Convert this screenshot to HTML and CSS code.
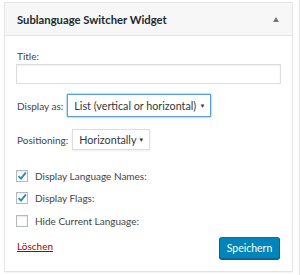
FILE: index.html
```html
<!DOCTYPE html>
<html>
<head>
<meta charset="utf-8">
<link rel="stylesheet" href="styles.css">
</head>
<body>
<div class="page">
  <div class="widget">
    <div class="widget-top">
      <span class="widget-title">Sublanguage Switcher Widget</span>
      <span class="toggle"></span>
    </div>
    <div class="widget-inside">
      <label class="label-block">Title:</label>
      <div class="text-input"></div>
      <div class="row row-display">
        <span class="row-label">Display as:</span>
        <div class="select select-focus"><span class="select-text">List (vertical or horizontal)</span><span class="caret">&#9660;</span></div>
      </div>
      <div class="row row-pos">
        <span class="row-label">Positioning:</span>
        <div class="select"><span class="select-text">Horizontally</span><span class="caret">&#9660;</span></div>
      </div>
      <div class="check-row first">
        <span class="checkbox"><svg viewBox="0 0 12 12" width="12" height="12"><path d="M2.6 6.2 L5 8.6 L9.8 2.6" fill="none" stroke="#1e8cbe" stroke-width="1.9"/></svg></span>
        <span class="check-label">Display Language Names:</span>
      </div>
      <div class="check-row second">
        <span class="checkbox"><svg viewBox="0 0 12 12" width="12" height="12"><path d="M2.6 6.2 L5 8.6 L9.8 2.6" fill="none" stroke="#1e8cbe" stroke-width="1.9"/></svg></span>
        <span class="check-label">Display Flags:</span>
      </div>
      <div class="check-row third">
        <span class="checkbox"></span>
        <span class="check-label">Hide Current Language:</span>
      </div>
      <div class="actions">
        <a class="delete">Löschen</a>
        <span class="button">Speichern</span>
      </div>
    </div>
  </div>
  <div class="side-line"></div>
</div>
</body>
</html>
```

FILE: styles.css
```css
html, body {
  margin: 0;
  padding: 0;
  background: #fff;
}
body {
  font-family: "Lato", "Open Sans", sans-serif;
  font-size: 10px;
  color: #444;
  width: 300px;
  height: 275px;
  overflow: hidden;
}
.page {
  display: flex;
  align-items: flex-start;
  padding: 2px 0 0 4px;
}
.side-line {
  margin-left: 6px;
  width: 1px;
  height: 280px;
  margin-top: -2px;
  background: #e5e5e5;
}
.widget {
  width: 289px;
  height: 270px;
  border: 1px solid #e5e5e5;
  box-sizing: border-box;
  box-shadow: 0 1px 1px rgba(0,0,0,0.04);
}
.widget-top {
  height: 32px;
  background: #f7f7f7;
  border-bottom: 1px solid #e5e5e5;
  display: flex;
  align-items: center;
  justify-content: space-between;
  padding: 0 13px 0 12px;
}
.widget-title {
  font-weight: 700;
  color: #23282d;
  font-size: 11.25px;
}
.toggle {
  width: 0;
  height: 0;
  border-left: 3.5px solid transparent;
  border-right: 3.5px solid transparent;
  border-bottom: 5px solid #72777c;
}
.widget-inside {
  padding: 0 11px;
  display: flex;
  flex-direction: column;
}
.label-block {
  display: block;
  margin-top: 13px;
  line-height: 14px;
  padding-left: 1px;
}
.text-input {
  margin-top: 1px;
  height: 20px;
  width: 265px;
  box-sizing: border-box;
  border: 1px solid #ddd;
  box-shadow: inset 0 1px 2px rgba(0,0,0,0.07);
  background: #fff;
}
.row {
  display: flex;
  align-items: center;
  gap: 4px;
  padding-left: 1px;
}
.row-display { margin-top: 10px; }
.row-pos { margin-top: 12px; }
.select {
  display: flex;
  align-items: center;
  justify-content: space-between;
  box-sizing: border-box;
  border: 1px solid #ddd;
  box-shadow: 0 1px 2px rgba(0,0,0,0.07);
  padding: 0 5px 0 6px;
  color: #32373c;
  background: #fff;
  white-space: nowrap;
}
.row-display .select {
  height: 23px;
  width: 144px;
}
.row-pos .select {
  height: 21px;
  width: 78px;
}
.select-focus {
  border-color: #5b9dd9;
  box-shadow: 0 0 2px rgba(30,140,190,0.8);
}
.select-text { font-size: 10.75px; }
.caret {
  font-size: 6px;
  color: #32373c;
}
.check-row {
  display: flex;
  align-items: center;
  gap: 7px;
  height: 14px;
}
.check-row.first { margin-top: 19px; }
.check-row.second { margin-top: 8px; }
.check-row.third { margin-top: 9px; }
.checkbox {
  width: 12px;
  height: 12px;
  box-sizing: border-box;
  border: 1px solid #b4b9be;
  box-shadow: inset 0 1px 2px rgba(0,0,0,0.1);
  background: #fff;
  position: relative;
  display: block;
}
.checkbox svg {
  position: absolute;
  left: -1px;
  top: -1px;
}
.actions {
  display: flex;
  justify-content: space-between;
  align-items: flex-start;
  margin-top: 9px;
}
.delete {
  color: #a00;
  text-decoration: underline;
  padding-left: 1px;
  margin-top: 3px;
}
.button {
  height: 22px;
  width: 61px;
  box-sizing: border-box;
  display: flex;
  align-items: center;
  justify-content: center;
  font-size: 10.5px;
  background: #0085ba;
  border: 1px solid;
  border-color: #0073aa #006799 #006799;
  border-radius: 3px;
  box-shadow: 0 1px 0 #006799;
  color: #fff;
  margin-right: 1px;
}
```
